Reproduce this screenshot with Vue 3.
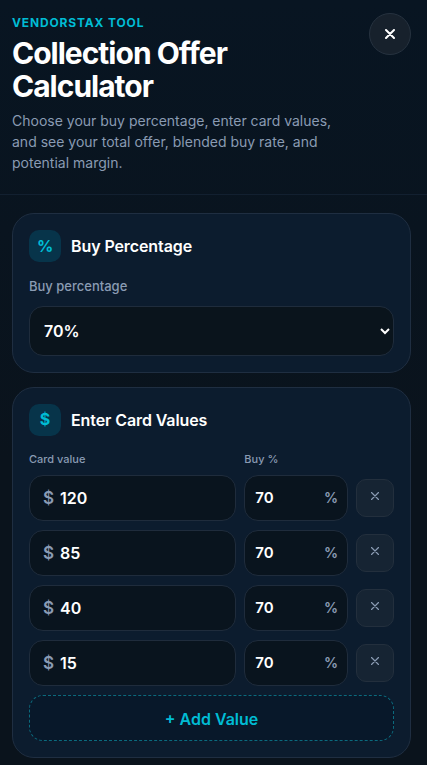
<script setup>
const rows = [120, 85, 40, 15]
</script>

<template>
  <div class="page">
    <header class="head">
      <div class="head-text">
        <div class="eyebrow">VENDORSTAX TOOL</div>
        <h1 class="title">Collection Offer Calculator</h1>
        <p class="desc">Choose your buy percentage, enter card values, and see your total offer, blended buy rate, and potential margin.</p>
      </div>
      <button class="close" aria-label="Close">
        <svg width="10" height="10" viewBox="0 0 10 10"><path d="M1 1l8 8M9 1L1 9" stroke="#fff" stroke-width="2" stroke-linecap="round" fill="none"/></svg>
      </button>
    </header>
    <main class="body">
      <section class="card">
        <div class="card-head">
          <span class="badge">%</span>
          <h2 class="card-title">Buy Percentage</h2>
        </div>
        <label class="label">Buy percentage</label>
        <select class="select">
          <option>70%</option>
        </select>
      </section>
      <section class="card">
        <div class="card-head">
          <span class="badge raised">$</span>
          <h2 class="card-title">Enter Card Values</h2>
        </div>
        <div class="grid cols">
          <span>Card value</span>
          <span>Buy %</span>
        </div>
        <div v-for="v in rows" :key="v" class="grid row">
          <div class="field">
            <span class="dollar">$</span>
            <input class="input" :value="v" />
          </div>
          <div class="field pct">
            <input class="input small" value="70" />
            <span class="unit">%</span>
          </div>
          <button class="remove" aria-label="Remove">
            <svg width="8" height="8" viewBox="0 0 8 8"><path d="M.5.5l7 7M7.5.5l-7 7" stroke="#8a9bb3" stroke-width="1.2" stroke-linecap="round" fill="none"/></svg>
          </button>
        </div>
        <button class="add">+ Add Value</button>
      </section>
    </main>
  </div>
</template>

<style>
html, body { margin: 0; background: #08121c; }
</style>

<style scoped>
* { box-sizing: border-box; }
.page {
  width: 427px;
  height: 765px;
  overflow: hidden;
  font-family: Inter, "Liberation Sans", sans-serif;
  color: #fff;
  background: linear-gradient(180deg, #081522 0%, #0a131c 60%, #0a131c 100%);
}
.head {
  display: flex;
  justify-content: space-between;
  align-items: flex-start;
  padding: 13px 16px 0 12px;
  height: 195px;
  border-bottom: 1px solid #122030;
}
.head-text { width: 325px; }
.eyebrow {
  margin-top: 1px;
  font-size: 12px;
  line-height: 18px;
  font-weight: 700;
  letter-spacing: 0.85px;
  color: #00bcd4;
}
.title {
  margin: 5px 0 0;
  font-size: 30px;
  line-height: 33px;
  font-weight: 700;
  letter-spacing: -1px;
}
.desc {
  margin: 7px 0 0;
  font-size: 14px;
  line-height: 21px;
  color: #8a9bb3;
}
.close {
  width: 42px;
  height: 42px;
  border-radius: 50%;
  border: 1px solid #26323f;
  background: #17212c;
  display: flex;
  align-items: center;
  justify-content: center;
  padding: 0;
}
.body {
  padding: 18px 16px 0 12px;
  display: flex;
  flex-direction: column;
  gap: 14px;
}
.card {
  border: 1px solid #1f2e41;
  border-radius: 22px;
  background: #0c1c2e;
  padding: 16px;
}
.card-head {
  display: flex;
  align-items: center;
  gap: 10px;
  height: 32px;
}
.badge {
  width: 32px;
  height: 32px;
  border-radius: 10px;
  background: #07344a;
  color: #00bcd4;
  font-size: 16px;
  font-weight: 700;
  display: flex;
  align-items: center;
  justify-content: center;
}
.raised { padding-bottom: 3px; }
.card-title {
  margin: 0;
  font-size: 16px;
  line-height: 20px;
  font-weight: 600;
  letter-spacing: -0.1px;
}
.label {
  display: block;
  margin-top: 14px;
  font-size: 13px;
  line-height: 20px;
  font-weight: 500;
  color: #8a9bb3;
}
.select {
  display: block;
  width: 100%;
  height: 50px;
  margin-top: 10px;
  padding: 0 0 0 10px;
  border: 1px solid #1f2c3c;
  border-radius: 14px;
  background: #0a141c;
  color: #fff;
  font-family: inherit;
  font-size: 16px;
  font-weight: 600;
}
.grid {
  display: grid;
  grid-template-columns: 2fr 1fr 38px;
  gap: 8px;
  align-items: center;
}
.cols {
  margin-top: 15px;
  margin-bottom: 8px;
  font-size: 11px;
  line-height: 16px;
  font-weight: 500;
  color: #8a9bb3;
}
.row { margin-bottom: 9.5px; }
.field {
  height: 45.5px;
  display: flex;
  align-items: center;
  border: 1px solid #1f2c3c;
  border-radius: 14px;
  background: #09141e;
  padding: 0 13px;
}
.pct { padding: 0 9px 0 10px; }
.dollar {
  font-size: 17px;
  font-weight: 600;
  color: #8a9bb3;
  margin-right: 6px;
}
.input {
  flex: 1;
  min-width: 0;
  width: 100%;
  border: 0;
  outline: 0;
  padding: 0;
  background: transparent;
  color: #fff;
  font-family: inherit;
  font-size: 16px;
  font-weight: 600;
}
.small { font-size: 15px; }
.unit {
  font-size: 14px;
  font-weight: 600;
  color: #8a9bb3;
}
.remove {
  width: 38px;
  height: 38px;
  border-radius: 10px;
  border: 1px solid #232f3d;
  background: #162433;
  display: flex;
  align-items: center;
  justify-content: center;
  padding: 0 0 3px;
}
.add {
  display: block;
  width: 100%;
  height: 46px;
  margin-top: 0.5px;
  border: 1px dashed #0b6a7d;
  border-radius: 14px;
  background: #08182a;
  color: #00bcd4;
  font-family: inherit;
  font-size: 16px;
  font-weight: 600;
  padding: 1px 0 0;
}
</style>
